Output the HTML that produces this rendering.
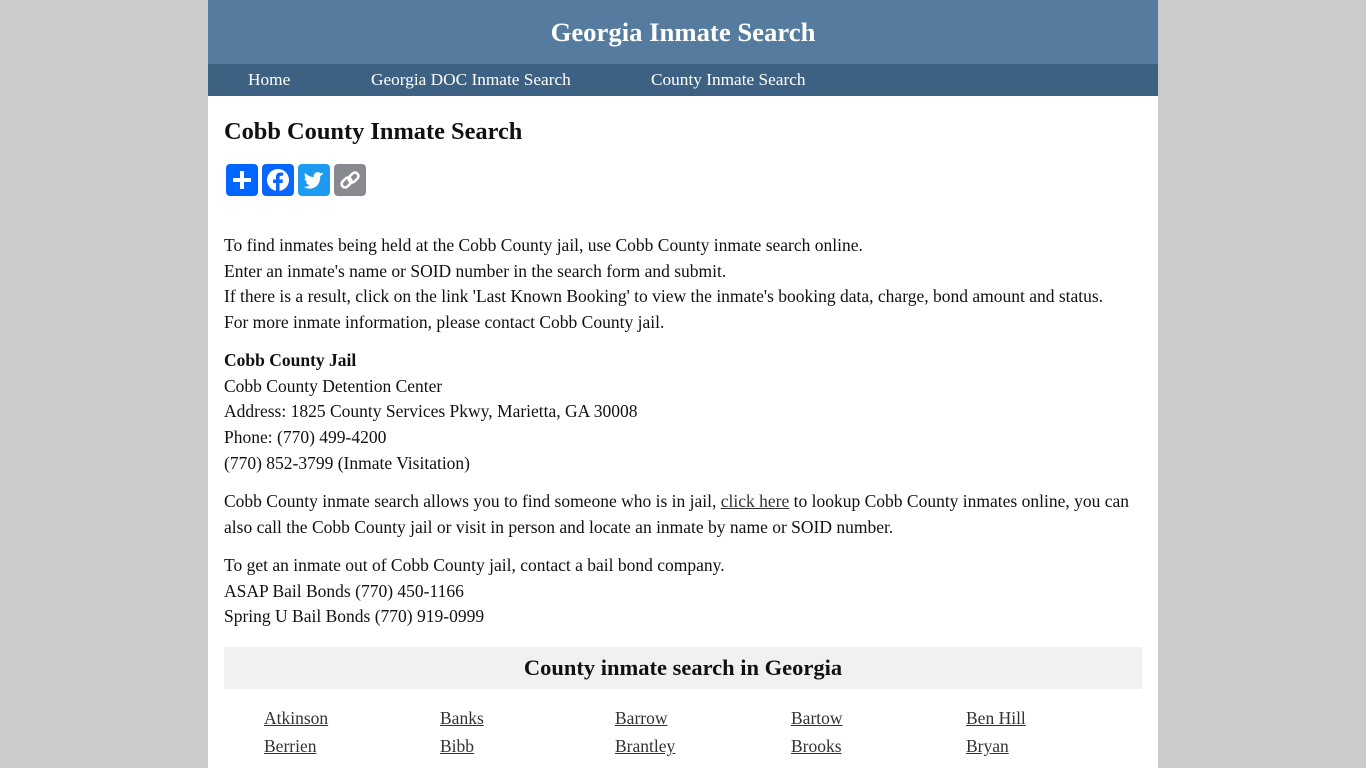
<!DOCTYPE html>
<html><head><meta charset="utf-8"><style>
html,body{margin:0;padding:0;background:#cbcbcb;}
body{font-family:"Liberation Serif",serif;color:#111;}
#wrap{position:absolute;left:208px;top:0;width:950px;height:768px;background:#fff;overflow:hidden;}
#hdr{height:64px;background:#557b9f;color:#fff;text-align:center;font-weight:bold;font-size:26.7px;line-height:64px;}
#nav{height:32px;background:#3d6182;color:#fff;font-size:17.3px;line-height:32px;position:relative;}
#nav span{position:absolute;top:0;}
h1{position:absolute;left:16px;top:118px;margin:0;font-size:24.4px;font-weight:bold;}
.icons{position:absolute;left:18px;top:164px;}
.ic{position:absolute;top:0;width:32px;height:32px;border-radius:4px;}
.txt{position:absolute;left:16px;font-size:17.5px;line-height:25.7px;}
.txt p{margin:0;}
a{color:#333;}
.bar{position:absolute;left:16px;top:647px;width:918px;height:42px;background:#f1f1f1;text-align:center;font-weight:bold;font-size:22.5px;line-height:42px;}
.c{position:absolute;font-size:17.5px;}
</style></head><body>
<div id="wrap">
<div id="hdr">Georgia Inmate Search</div>
<div id="nav"><span style="left:40px">Home</span><span style="left:163px">Georgia DOC Inmate Search</span><span style="left:443px">County Inmate Search</span></div>
<h1>Cobb County Inmate Search</h1>
<div class="icons">
<div class="ic" style="left:0;background:#0166ff"><svg width="32" height="32"><path d="M16 7v18M7 16h18" stroke="#fff" stroke-width="4"/></svg></div>
<div class="ic" style="left:36px;background:#0866ff"><svg width="32" height="32"><circle cx="16" cy="16" r="11" fill="#fff"/><path d="M17.5 28v-9h3l.5-3.5h-3.5v-2c0-1 .4-1.7 1.8-1.7h1.8V8.7c-.4 0-1.5-.2-2.7-.2-2.7 0-4.4 1.6-4.4 4.5v2.5h-3V19h3v9z" fill="#0866ff"/></svg></div>
<div class="ic" style="left:72px;background:#1d9bf0"><svg width="32" height="32"><path d="M26 10c-.7.3-1.5.5-2.3.6.8-.5 1.5-1.3 1.8-2.2-.8.5-1.7.8-2.6 1-1.6-1.7-4.4-1.8-6-.1-1 1-1.5 2.5-1.2 3.9-3.3-.2-6.4-1.7-8.5-4.3-1.1 1.900-.5 4.300 1.300 5.500-.7 0-1.300-.2-1.900-.5 0 2 1.400 3.700 3.300 4.100-.6.2-1.300.2-1.900.1.500 1.700 2.100 2.900 3.900 2.900-1.800 1.400-4.100 2.100-6.400 1.800 7.100 4.500 17.100.4 16.700-10.600.8-.6 1.400-1.200 1.900-2z" fill="#fff"/></svg></div>
<div class="ic" style="left:108px;background:#888a8f"><svg width="32" height="32"><g fill="none" stroke="#fff" stroke-width="2.6"><rect x="7" y="15" width="11" height="7" rx="3.5" transform="rotate(-45 12.5 18.5)"/><rect x="14" y="10" width="11" height="7" rx="3.5" transform="rotate(-45 19.5 13.5)"/></g></svg></div>
</div>
<div class="txt" style="top:233px"><p>To find inmates being held at the Cobb County jail, use Cobb County inmate search online.<br>Enter an inmate's name or SOID number in the search form and submit.<br>If there is a result, click on the link 'Last Known Booking' to view the inmate's booking data, charge, bond amount and status.<br>For more inmate information, please contact Cobb County jail.</p></div>
<div class="txt" style="top:348px"><b>Cobb County Jail</b><br>Cobb County Detention Center<br>Address: 1825 County Services Pkwy, Marietta, GA 30008<br>Phone: (770) 499-4200<br>(770) 852-3799 (Inmate Visitation)</div>
<div class="txt" style="top:489px;width:915px">Cobb County inmate search allows you to find someone who is in jail, <a href="#">click here</a> to lookup Cobb County inmates online, you can<br>also call the Cobb County jail or visit in person and locate an inmate by name or SOID number.</div>
<div class="txt" style="top:553px">To get an inmate out of Cobb County jail, contact a bail bond company.<br>ASAP Bail Bonds (770) 450-1166<br>Spring U Bail Bonds (770) 919-0999</div>
<div class="bar">County inmate search in Georgia</div>
<a class="c" href="#" style="left:56px;top:708px">Atkinson</a>
<a class="c" href="#" style="left:232px;top:708px">Banks</a>
<a class="c" href="#" style="left:407px;top:708px">Barrow</a>
<a class="c" href="#" style="left:583px;top:708px">Bartow</a>
<a class="c" href="#" style="left:758px;top:708px">Ben Hill</a>
<a class="c" href="#" style="left:56px;top:736px">Berrien</a>
<a class="c" href="#" style="left:232px;top:736px">Bibb</a>
<a class="c" href="#" style="left:407px;top:736px">Brantley</a>
<a class="c" href="#" style="left:583px;top:736px">Brooks</a>
<a class="c" href="#" style="left:758px;top:736px">Bryan</a>
</div>
</body></html>
